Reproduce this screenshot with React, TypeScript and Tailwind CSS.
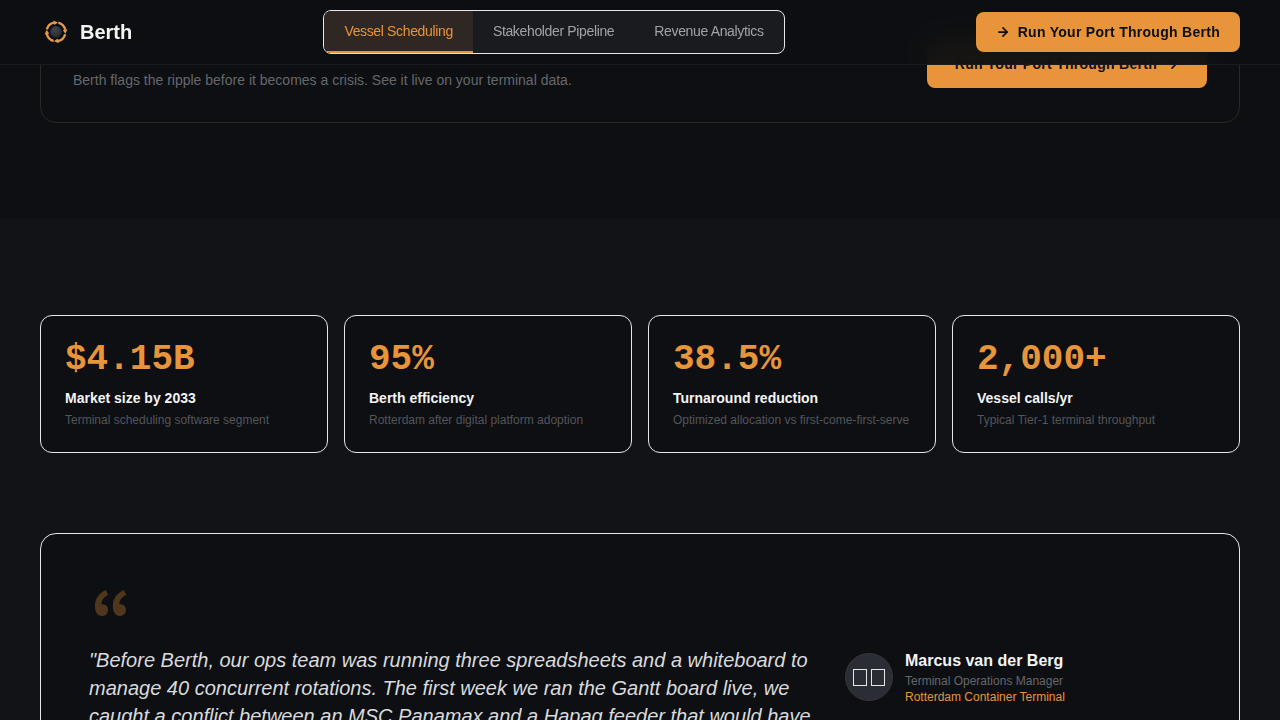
import { clsx } from "clsx"
import { ArrowRight } from "lucide-react"

const tabs = ["Vessel Scheduling", "Stakeholder Pipeline", "Revenue Analytics"]

const stats = [
  { value: "$4.15B", label: "Market size by 2033", note: "Terminal scheduling software segment" },
  { value: "95%", label: "Berth efficiency", note: "Rotterdam after digital platform adoption" },
  { value: "38.5%", label: "Turnaround reduction", note: "Optimized allocation vs first-come-first-serve" },
  { value: "2,000+", label: "Vessel calls/yr", note: "Typical Tier-1 terminal throughput" },
]

function Logo() {
  return (
    <svg viewBox="0 0 32 32" className="h-8 w-8" fill="none" aria-hidden="true">
      <defs>
        <radialGradient id="hub" cx="0.4" cy="0.35" r="0.7">
          <stop offset="0" stopColor="#41464d" />
          <stop offset="1" stopColor="#24272c" />
        </radialGradient>
      </defs>
      <circle cx="16" cy="15.8" r="5.8" fill="url(#hub)" />
      {[0, 90, 180, 270].map((angle) => (
        <g key={angle} transform={`rotate(${angle} 16 15.8)`}>
          <path d="M6.8 13.4A9.5 9.5 0 0 1 14 6.6" stroke="#e39a4c" strokeWidth="2.4" />
          <path d="M13.4 4.4L18 6.4L14.4 9Z" fill="#e39a4c" />
        </g>
      ))}
    </svg>
  )
}

function Header() {
  return (
    <header className="fixed inset-x-0 top-0 z-50 border-b border-[#1a1b1f] bg-[#0d0f12]/95 backdrop-blur-md">
      <div className="mx-auto flex h-16 max-w-7xl items-center justify-between px-10">
        <a href="#top" className="flex items-center gap-2 text-xl font-bold text-[#f4f4f5]">
          <Logo />
          Berth
        </a>

        <nav
          className="flex h-11 overflow-hidden rounded-lg border border-[#e5e7eb] bg-[#1a1b1f]"
          aria-label="Product areas"
        >
          {tabs.map((tab, index) => (
            <button
              key={tab}
              type="button"
              className={clsx(
                "border-b-2 px-5 text-sm tracking-tight",
                index === 0
                  ? "border-[#e8943a] bg-[#2f2723] text-[#e8943a]"
                  : "border-transparent text-[#a1a1aa]"
              )}
            >
              {tab}
            </button>
          ))}
        </nav>

        <button
          type="button"
          className="flex h-10 items-center gap-2 rounded-lg bg-[#e8943a] px-5 text-sm font-bold tracking-[0.02em] text-[#0d0f12]"
        >
          <ArrowRight className="h-3.5 w-3.5" strokeWidth={3} aria-hidden="true" />
          Run Your Port Through Berth
        </button>
      </div>
    </header>
  )
}

export default function App() {
  return (
    <div className="min-h-screen bg-[#121317] font-['Liberation_Sans',Arial,sans-serif] text-[#f4f4f5]">
      <Header />

      <main id="top">
        <section className="bg-[#0d0f12] pt-[5px] pb-24">
          <div className="mx-auto max-w-7xl px-10">
            <div className="flex items-center justify-between gap-8 rounded-2xl border border-[#2a2724] p-8">
              <div className="flex min-h-13 items-end">
                <p className="text-sm text-[#66676c]">
                  Berth flags the ripple before it becomes a crisis. See it live on your terminal data.
                </p>
              </div>
              <button
                type="button"
                className="flex h-12 shrink-0 items-center gap-2 rounded-lg bg-[#e8943a] px-7 text-sm font-bold tracking-[0.02em] text-[#0d0f12]"
              >
                Run Your Port Through Berth
                <ArrowRight className="h-3.5 w-3.5" strokeWidth={3} aria-hidden="true" />
              </button>
            </div>
          </div>
        </section>

        <section className="py-24">
          <div className="mx-auto max-w-7xl px-10">
            <div className="grid grid-cols-4 gap-4">
              {stats.map((stat) => (
                <div key={stat.label} className="rounded-xl border border-[#e5e7eb] bg-[#0d0f12] p-6">
                  <p className="font-['Liberation_Mono',monospace] text-4xl font-bold text-[#e8943a]">
                    {stat.value}
                  </p>
                  <p className="mt-2 text-sm font-bold">{stat.label}</p>
                  <p className="mt-1 text-xs whitespace-nowrap text-[#54555a]">{stat.note}</p>
                </div>
              ))}
            </div>

            {/* Testimonial */}
            <figure className="mt-20 grid grid-cols-[1fr_346px] items-center gap-8 rounded-2xl border border-[#e5e7eb] bg-[#0d0f12] p-12">
              <div className="pb-[42px]">
                <div
                  className="mb-1 pl-0.5 font-['Noto_Sans_CJK_KR',sans-serif] text-[64px]/15 font-black text-[#e8943a]/30"
                  aria-hidden="true"
                >
                  “
                </div>
                <blockquote className="text-xl/7 text-[#d9dadd] italic">
                  "Before Berth, our ops team was running three spreadsheets and a whiteboard to manage 40
                  concurrent rotations. The first week we ran the Gantt board live, we caught a conflict
                  between an MSC Panamax and a Hapag feeder that would have
                </blockquote>
              </div>
              <figcaption className="flex items-center gap-3">
                <span
                  className="flex h-12 w-12 shrink-0 items-center justify-center gap-1 rounded-full border border-[#34363c] bg-[#2a2d34]"
                  aria-hidden="true"
                >
                  <span className="h-[17px] w-3.5 border border-[#e5e7eb]" />
                  <span className="h-[17px] w-3.5 border border-[#e5e7eb]" />
                </span>
                <div>
                  <p className="font-bold">Marcus van der Berg</p>
                  <p className="text-xs text-[#66676c]">Terminal Operations Manager</p>
                  <p className="text-xs text-[#e8943a]">Rotterdam Container Terminal</p>
                </div>
              </figcaption>
            </figure>
          </div>
        </section>
      </main>
    </div>
  )
}
